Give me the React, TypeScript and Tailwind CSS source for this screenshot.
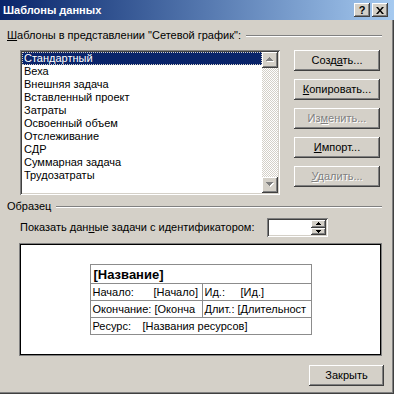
import React from "react";

const raised =
  "shadow-[inset_-1px_-1px_#404040,inset_1px_1px_#ffffff,inset_-2px_-2px_#808080,inset_2px_2px_#d4d0c8]";
const sunken =
  "shadow-[inset_1px_1px_#808080,inset_-1px_-1px_#ffffff,inset_2px_2px_#404040,inset_-2px_-2px_#d4d0c8]";

const items = [
  "Стандартный",
  "Веха",
  "Внешняя задача",
  "Вставленный проект",
  "Затраты",
  "Освоенный объем",
  "Отслеживание",
  "СДР",
  "Суммарная задача",
  "Трудозатраты",
];

const Arrow = ({ down }: { down?: boolean }) => (
  <svg width="8" height="6" viewBox="0 0 8 6">
    {down ? (
      <>
        <path d="M0 0h7v1h-1v1h-1v1h-1v1h-1v-1h-1v-1h-1v-1h-1z" fill="#ffffff" transform="translate(1 1)" />
        <path d="M0 0h7v1h-1v1h-1v1h-1v1h-1v-1h-1v-1h-1v-1h-1z" fill="#808080" />
      </>
    ) : (
      <>
        <path d="M3 0h1v1h1v1h1v1h1v1h-7v-1h1v-1h1v-1h1z" fill="#ffffff" transform="translate(1 1)" />
        <path d="M3 0h1v1h1v1h1v1h1v1h-7v-1h1v-1h1v-1h1z" fill="#808080" />
      </>
    )}
  </svg>
);

const Btn = ({
  children,
  disabled,
  className = "",
}: {
  children: React.ReactNode;
  disabled?: boolean;
  className?: string;
}) => (
  <div
    className={`flex items-center justify-center bg-[#d4d0c8] ${raised} ${
      disabled ? "text-[#808080] [text-shadow:1px_1px_0_#ffffff]" : "text-black"
    } ${className}`}
  >
    {children}
  </div>
);

const Sep = () => (
  <div className="flex-1 h-[2px] border-t border-t-[#808080] border-b border-b-white mt-[1px]" />
);

export default function App() {
  return (
    <div className="w-[394px] h-[394px] bg-[#d4d0c8] text-[11px] leading-[13px] text-black flex flex-col shadow-[inset_-1px_-1px_#404040,inset_-2px_-2px_#808080] font-['Liberation_Sans',Arial,sans-serif]">
      {/* title bar */}
      <div className="h-[20px] flex items-center bg-gradient-to-r from-[#0a246a] to-[#a6caf0] pl-[3px] pr-[6px]">
        <span className="text-white font-bold text-[11px]">Шаблоны данных</span>
        <div className="ml-auto flex">
          <div className={`w-[16px] h-[14px] bg-[#d4d0c8] ${raised} flex items-center justify-center font-bold text-[11px] leading-none`}>
            ?
          </div>
          <div className={`ml-[2px] w-[16px] h-[14px] bg-[#d4d0c8] ${raised} flex items-center justify-center`}>
            <svg width="8" height="7" viewBox="0 0 8 7">
              <path d="M0 0h2l2 2.5 2-2.5h2l-3 3.5 3 3.5h-2l-2-2.5-2 2.5h-2l3-3.5z" fill="#000" />
            </svg>
          </div>
        </div>
      </div>

      <div className="pl-[7px] pr-[12px] flex flex-col">
        {/* templates group */}
        <div className="flex items-center mt-[9px] h-[13px] gap-[5px]">
          <span>
            <u>Ш</u>аблоны в представлении "Сетевой график":
          </span>
          <Sep />
        </div>

        <div className="flex mt-[8px] pl-[13px]">
          <div className={`w-[260px] h-[145px] bg-white p-[2px] flex ${sunken}`}>
            <div className="flex-1 flex flex-col">
              {items.map((t, i) => (
                <div
                  key={t}
                  className={`h-[13px] pl-[2px] whitespace-nowrap ${
                    i === 0 ? "bg-[#0a246a] text-white outline outline-1 outline-dotted outline-[#d4d0c8] -outline-offset-1" : ""
                  }`}
                >
                  {t}
                </div>
              ))}
            </div>
            <div className="w-[16px] flex flex-col bg-[repeating-conic-gradient(#ffffff_0%_25%,#d4d0c8_0%_50%)] bg-[length:2px_2px]">
              <div className={`h-[16px] bg-[#d4d0c8] ${raised} flex items-center justify-center`}>
                <Arrow />
              </div>
              <div className="flex-1" />
              <div className={`h-[16px] bg-[#d4d0c8] ${raised} flex items-center justify-center`}>
                <Arrow down />
              </div>
            </div>
          </div>

          <div className="ml-[14px] w-[86px] flex flex-col gap-[8px]">
            <Btn className="h-[21px]">
              <span>
                Созд<u>а</u>ть...
              </span>
            </Btn>
            <Btn className="h-[21px]">
              <span>
                <u>К</u>опировать...
              </span>
            </Btn>
            <Btn className="h-[21px]" disabled>
              <span>
                Из<u>м</u>енить...
              </span>
            </Btn>
            <Btn className="h-[21px]">
              <span>
                <u>И</u>мпорт...
              </span>
            </Btn>
            <Btn className="h-[21px]" disabled>
              <span>
                <u>У</u>далить...
              </span>
            </Btn>
          </div>
        </div>

        {/* sample group */}
        <div className="flex items-center mt-[5px] h-[13px] gap-[5px]">
          <span>Образец</span>
          <Sep />
        </div>

        <div className="flex items-center mt-[5px] pl-[13px] h-[19px]">
          <span>
            Показать дан<u>н</u>ые задачи с идентификатором:
          </span>
          <div className={`ml-[12px] w-[61px] h-[19px] bg-white flex justify-end p-[2px] ${sunken}`}>
            <div className="w-[15px] flex flex-col">
              <div className={`flex-1 bg-[#d4d0c8] ${raised} flex items-center justify-center`}>
                <svg width="5" height="3" viewBox="0 0 5 3">
                  <path d="M2 0h1v1h1v1h1v1h-5v-1h1v-1h1z" fill="#000" />
                </svg>
              </div>
              <div className={`flex-1 bg-[#d4d0c8] ${raised} flex items-center justify-center`}>
                <svg width="5" height="3" viewBox="0 0 5 3">
                  <path d="M0 0h5v1h-1v1h-1v1h-1v-1h-1v-1h-1z" fill="#000" />
                </svg>
              </div>
            </div>
          </div>
        </div>

        {/* preview */}
        <div className="ml-[13px] mt-[7px] w-[361px] h-[111px] bg-white border border-black shadow-[0_0_0_1px_#808080] flex justify-center pt-[19px]">
          <div className="w-[222px] h-[71px] border border-[#8c8c8c] flex flex-col self-start">
            <div className="h-[19px] px-[3px] flex items-center font-bold text-[13px] border-b border-[#8c8c8c]">
              [Название]
            </div>
            <div className="h-[17px] flex border-b border-[#8c8c8c] whitespace-nowrap overflow-hidden">
              <div className="w-[112px] flex items-center pl-[2px] border-r border-[#8c8c8c] overflow-hidden">
                <span className="w-[61px]">Начало:</span>
                <span>[Начало]</span>
              </div>
              <div className="flex-1 flex items-center pl-[2px] overflow-hidden">
                <span className="w-[36px]">Ид.:</span>
                <span>[Ид.]</span>
              </div>
            </div>
            <div className="h-[17px] flex border-b border-[#8c8c8c] whitespace-nowrap overflow-hidden">
              <div className="w-[112px] flex items-center pl-[2px] border-r border-[#8c8c8c] overflow-hidden">
                <span>Окончание: [Оконча</span>
              </div>
              <div className="flex-1 flex items-center pl-[2px] overflow-hidden">
                <span>Длит.: [Длительност</span>
              </div>
            </div>
            <div className="h-[16px] flex items-center pl-[2px] whitespace-nowrap">
              <span className="w-[50px]">Ресурс:</span>
              <span>[Названия ресурсов]</span>
            </div>
          </div>
        </div>

        <div className="flex justify-end mt-[10px]">
          <Btn className="w-[75px] h-[21px] mr-[-2px]">Закрыть</Btn>
        </div>
      </div>
    </div>
  );
}
